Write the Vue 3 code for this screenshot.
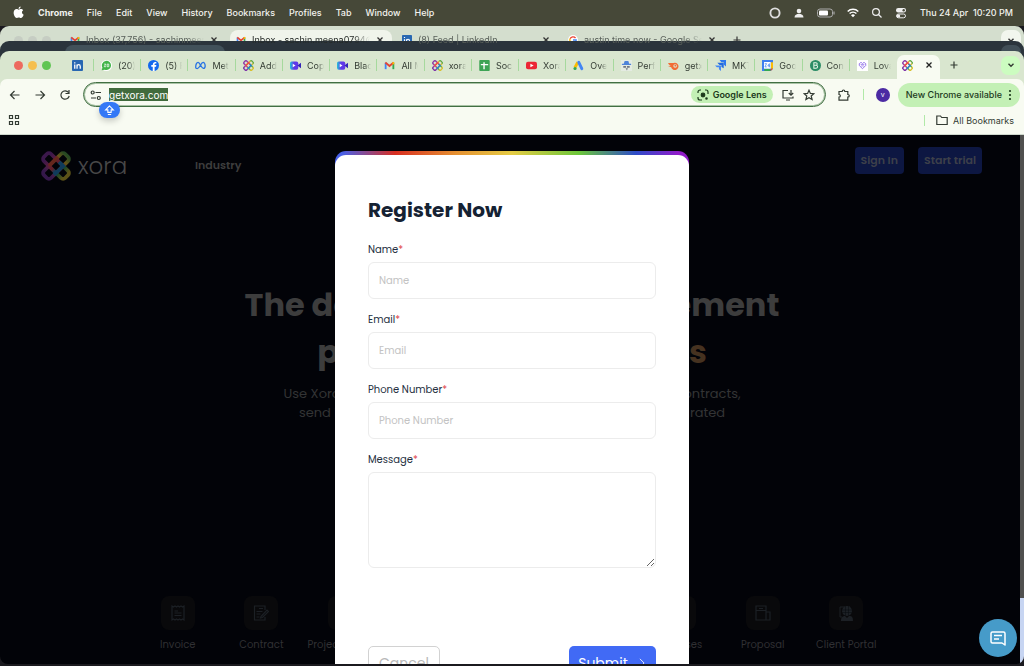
<script setup>
import { ref } from 'vue'

const menus = ['File', 'Edit', 'View', 'History', 'Bookmarks', 'Profiles', 'Tab', 'Window', 'Help']
const tabs = [
  { icon: 'whatsapp', text: '(20)' },
  { icon: 'facebook', text: '(5) F' },
  { icon: 'meta', text: 'Meta' },
  { icon: 'xora', text: 'Add' },
  { icon: 'video', text: 'Copy' },
  { icon: 'video', text: 'Black' },
  { icon: 'gmail', text: 'All M' },
  { icon: 'xora', text: 'xora' },
  { icon: 'sheets', text: 'Soc' },
  { icon: 'youtube', text: 'Xora' },
  { icon: 'ads', text: 'Over' },
  { icon: 'spy', text: 'Perf' },
  { icon: 'semrush', text: 'getx' },
  { icon: 'jira', text: 'MKT' },
  { icon: 'calendar', text: 'Goog' },
  { icon: 'brevo', text: 'Con' },
  { icon: 'lovable', text: 'Lova' },
]
const features = [
  { label: 'Invoice', icon: 'invoice' },
  { label: 'Contract', icon: 'contract' },
  { label: 'Project Planner', icon: 'project' },
  { label: 'Tasks', icon: 'project' },
  { label: 'Booking', icon: 'project' },
  { label: 'Forms', icon: 'project' },
  { label: 'Expenses', icon: 'project' },
  { label: 'Proposal', icon: 'proposal' },
  { label: 'Client Portal', icon: 'portal' },
]
const address = ref('getxora.com')
const name = ref('')
const email = ref('')
const phone = ref('')
const message = ref('')
</script>

<template>
  <div class="desktop">
    <svg class="defs" aria-hidden="true">
      <defs>
        <linearGradient id="g-video"><stop stop-color="#21c6d8" /><stop offset=".5" stop-color="#6038e8" /></linearGradient>
        <linearGradient id="g-down"><stop offset=".1" stop-color="#8a35a8" /><stop offset=".35" stop-color="#d8408a" /><stop offset=".48" stop-color="#e8484a" /><stop offset=".6" stop-color="#2589cf" /><stop offset=".75" stop-color="#41a453" /><stop offset=".95" stop-color="#d8c02e" /></linearGradient>
        <linearGradient id="g-up"><stop offset=".1" stop-color="#7d35a8" /><stop offset=".3" stop-color="#b84a98" /><stop offset=".45" stop-color="#e8484a" /><stop offset=".65" stop-color="#ee7a35" /><stop offset=".8" stop-color="#e8c22e" /><stop offset="1" stop-color="#59a848" /></linearGradient>
      </defs>
      <symbol id="i-linkedin" viewBox="0 0 12 12"><rect width="12" height="12" rx="1" fill="#2867b2" /><path d="M3 5v4.500M3 2.500v1.200M5.500 9.500V5M5.500 7c0-2.500 3.500-2.500 3.500 0v2.500" fill="none" stroke="#fff" stroke-width="1.400" /></symbol>
      <symbol id="i-whatsapp" viewBox="0 0 12 12"><circle cx="6" cy="6" r="6" fill="#fff" /><path d="M.8 11.200l.7-3A5 5 0 1 1 4 10.500z" fill="#43b54a" /><path d="M3.300 4.500h2L3.500 7.300h2M6.700 4.500h1.800v2.800H6.700z" fill="none" stroke="#fff" stroke-width=".8" /></symbol>
      <symbol id="i-facebook" viewBox="0 0 12 12"><circle cx="6" cy="6" r="6" fill="#1268ee" /><path d="M7.200 12V7.400h1.600l.3-1.900H7.200c-.1-1.500.3-1.900 1.900-1.700V2.200C6.800 1.700 5.200 2.600 5.200 5.500H3.600v1.900h1.600V12z" fill="#fff" /></symbol>
      <symbol id="i-meta" viewBox="0 0 12 12"><path d="M.8 8.500C.6 5 1.800 2.600 3.400 2.600c2 0 3.500 6.600 5.700 6.600 1.400 0 2-1.200 2-2.700 0-2-.9-3.900-2.300-3.900C6.400 2.600 5.300 9.300 2.500 9.300 1.500 9.300.8 9 .8 8.500z" fill="none" stroke="#2873e4" stroke-width="1.400" /></symbol>
      <symbol id="i-xora" viewBox="0 0 30 30"><g fill="none" stroke-width="3.800"><rect x="0" y="10" width="30" height="10" rx="3" transform="rotate(-45 15 15)" stroke="url(#g-up)" /><rect x="0" y="10" width="30" height="10" rx="3" transform="rotate(45 15 15)" stroke="url(#g-down)" /><path d="m8 15 9-9" stroke="#ee5a3a" /><path d="m13 24 9-9-4-4" stroke="#2589cf" /></g></symbol>
      <symbol id="i-video" viewBox="0 0 12 12"><rect y="1.500" width="9" height="9" rx="2" fill="url(#g-video)" /><path d="m8 6 4-3v6z" fill="#3424b8" /><path d="m3 4 3 2-3 2z" fill="#fff" /></symbol>
      <symbol id="i-gmail" viewBox="0 0 12 12"><path d="M1.800 10V3" stroke="#4285f4" stroke-width="2" /><path d="M10.200 10V3" stroke="#34a853" stroke-width="2" /><path d="m1.500 2.800 4.500 3.700 4.500-3.700" fill="none" stroke="#e54335" stroke-width="2" /><path d="M9.200 4.800V2.300l2 .2v2z" fill="#fbbc04" /></symbol>
      <symbol id="i-sheets" viewBox="0 0 12 12"><rect x=".3" width="11.400" height="12" rx="1" fill="#3da455" /><path d="M2 5h8M5.500 2.500v7.500" stroke="#fff" stroke-width="1.500" /></symbol>
      <symbol id="i-youtube" viewBox="0 0 12 12"><rect y="1.800" width="12" height="8.400" rx="2.200" fill="#ec2636" /><path d="M4.800 4v4l3.500-2z" fill="#fff" /></symbol>
      <symbol id="i-ads" viewBox="0 0 12 12"><path d="M5.200 2.500 2 8.500" stroke="#fbbc04" stroke-width="3.200" /><path d="m6.300 2.500 3.300 7" stroke="#4285f4" stroke-width="3.200" stroke-linecap="round" /><circle cx="2.200" cy="9.200" r="1.700" fill="#34a853" /></symbol>
      <symbol id="i-spy" viewBox="0 0 12 12"><rect width="12" height="12" fill="#e4ebe2" /><path d="M3 4 4 1h4l1 3zM1 4h10v1.500H1z" fill="#4e83d9" /><path d="M2.500 6.500h3v2h-3zM6.500 6.500h3v2h-3zM5 9h2.500l-1 2.500z" fill="#717783" /></symbol>
      <symbol id="i-semrush" viewBox="0 0 12 12"><path d="M0 3.200h6a4 4 0 1 1-2.500 4.600L0 6.500l3-.3L1 4.800z" fill="#f26b35" /><circle cx="7.800" cy="6.500" r="2" fill="#dce8d2" /><circle cx="8" cy="6.200" r="1" fill="#f26b35" /></symbol>
      <symbol id="i-jira" viewBox="0 0 12 12"><path d="M5 0h7v7L9.500 5V2.500H7z" fill="#2d78ee" /><path d="M2.500 3h7v6L7 7.500V5.500H5z" fill="#246ce0" /><path d="M0 6h6.500v6L4.300 10V8H2z" fill="#4388f4" /></symbol>
      <symbol id="i-calendar" viewBox="0 0 12 12"><path d="M0 0h12v9.500L9.500 12H0z" fill="#3d7ff0" /><path d="M9.500 2.500H12v7H9.500z" fill="#fbbc04" /><path d="M2.500 9.500h7V12h-7z" fill="#34a853" /><path d="m9.500 12 2.500-2.500H9.500z" fill="#ea4335" /><path d="M2.200 2.200h7.300v7.300H2.200z" fill="#fff" /><path d="M3 4h2L3.200 7.500h2M8 8V4L6.300 6.500h2.400" fill="none" stroke="#3d7ff0" stroke-width=".8" /></symbol>
      <symbol id="i-brevo" viewBox="0 0 12 12"><circle cx="6" cy="6" r="6" fill="#2c8c66" /><path d="M4.200 9V3h2.300c1.800 0 1.800 2.400.2 2.700C9 5.800 8.700 9 6.500 9zM4.200 5.700h2.500" fill="none" stroke="#e8f7e9" stroke-width="1.100" /></symbol>
      <symbol id="i-lovable" viewBox="0 0 12 12"><rect width="12" height="12" fill="#fff" /><path d="M6 9.500 2.500 6V4C4 2 5.500 3 6 3.800 6.500 3 8 2 9.500 4v2z" fill="none" stroke="#8d6be8" /><path d="M4 5h4M4.500 6.500h3" stroke="#8d6be8" stroke-width=".8" /></symbol>
      <symbol id="i-google" viewBox="0 0 12 12"><circle cx="6" cy="6" r="6" fill="#fff" /><g fill="none" stroke-width="1.700"><path d="M9 3.500A4 4 0 0 0 2.500 4.500" stroke="#ea4335" /><path d="M2.500 4.400a4 4 0 0 0 0 3.200" stroke="#fbbc04" /><path d="M2.500 7.500A4 4 0 0 0 8.600 9" stroke="#34a853" /><path d="M8.600 9A4 4 0 0 0 9.800 6H6" stroke="#4285f4" /></g></symbol>
      <symbol id="i-close" viewBox="0 0 8 8"><path d="m1.500 1.500 5 5m0-5-5 5" stroke="currentColor" stroke-width="1.300" /></symbol>
      <symbol id="i-plus" viewBox="0 0 8 8"><path d="M4 .5v7M.5 4h7" stroke="currentColor" stroke-width="1.200" /></symbol>
      <symbol id="i-down" viewBox="0 0 8 8"><path d="m1.500 2.800 2.500 2.500 2.500-2.500" fill="none" stroke="currentColor" stroke-width="1.400" /></symbol>
      <symbol id="f-invoice" viewBox="0 0 16 18"><path d="M2 2v14l1.500-1L5 16l1.500-1L8 16l1.500-1 1.500 1 1.500-1 1.500 1V2l-1.500 1L11 2 9.500 3 8 2 6.500 3 5 2 3.500 3zM4.500 7H8M4.500 9h7M4.500 11.500h7" fill="none" stroke="currentColor" stroke-width="1.200" /></symbol>
      <symbol id="f-contract" viewBox="0 0 16 18"><path d="M12 6V2H1.500v14H12v-3M6 4.500h4M3.500 7.500h6M3.500 10h4M3.500 13h3M8 12.500 14 6l1.500 1.500-6 6-2 .5z" fill="none" stroke="currentColor" stroke-width="1.200" /></symbol>
      <symbol id="f-project" viewBox="0 0 16 18"><path d="M2 3h12v12H2zM5 7h6M5 10h6" fill="none" stroke="currentColor" /></symbol>
      <symbol id="f-proposal" viewBox="0 0 16 18"><path d="M1 16V2h10v14zM1 6.500h10M4 4.500h4M11 8h4v8h-4" fill="none" stroke="currentColor" stroke-width="1.200" /></symbol>
      <symbol id="f-portal" viewBox="0 0 16 18"><path d="M12 3H2v10h2" fill="none" stroke="currentColor" /><circle cx="9" cy="7" r="5" fill="currentColor" /><path d="M4 6h10M4 8.500h10M7.500 2v10M10.500 2v10" stroke="#0a0e10" stroke-width=".6" /><path d="M3 17c0-4 2-5 4-5l2 2 2-2c3 0 4 1 4 5z" fill="currentColor" /></symbol>
    </svg>

    <header class="menubar">
      <svg class="apple" viewBox="0 0 12 14"><path d="M8.300.5c.1 1.500-1 2.600-2.200 2.700C6 1.800 7 .7 8.300.5zM6.200 4c.7 0 1.300-.7 2.500-.7 1 0 1.900.5 2.400 1.300-2 1.200-1.700 4 .5 4.900-.6 1.700-1.700 3.500-3 3.500-.9 0-1.200-.5-2.300-.5-1 0-1.500.5-2.300.5C2.500 13 .7 10 .7 7.300c0-2.500 1.500-4 3.200-4 1 0 1.700.7 2.300.7z" fill="#fff" /></svg>
      <strong>Chrome</strong>
      <span v-for="m in menus" :key="m">{{ m }}</span>
      <div class="status">
        <svg viewBox="0 0 12 12"><circle cx="6" cy="6" r="4.600" fill="none" stroke="#ddd" stroke-width="1.900" /></svg>
        <svg viewBox="0 0 12 12"><circle cx="6" cy="4" r="2.300" fill="#eee" /><path d="M1.500 10.500C1.500 5.500 10.500 5.500 10.500 10.500z" fill="#eee" /></svg>
        <svg class="battery" viewBox="0 0 18 10"><rect x=".5" y="1" width="15" height="8" rx="2.500" fill="none" stroke="#aaa" /><rect x="2" y="2.500" width="9" height="5" rx="1" fill="#fff" /><path d="M17 3.500v3" stroke="#aaa" stroke-width="1.200" /></svg>
        <svg viewBox="0 0 12 12"><path d="M.7 4.500a7.500 7.500 0 0 1 10.600 0M2.600 6.500a5 5 0 0 1 6.800 0" fill="none" stroke="#fff" stroke-width="1.500" /><path d="M4 8.200a3 3 0 0 1 4 0l-2 2z" fill="#fff" /></svg>
        <svg viewBox="0 0 12 12"><circle cx="5" cy="5" r="3.400" fill="none" stroke="#eee" stroke-width="1.200" /><path d="m7.500 7.500 3 3" stroke="#eee" stroke-width="1.300" /></svg>
        <svg viewBox="0 0 12 12"><rect x="1" y="1" width="10" height="4.400" rx="2.200" fill="#eee" /><circle cx="8.700" cy="3.200" r="1.200" fill="#4a4b3c" /><rect x="1.500" y="7" width="9" height="3.800" rx="1.900" fill="none" stroke="#eee" /><circle cx="3.500" cy="8.900" r="1.700" fill="#eee" /></svg>
      </div>
      <time>Thu 24 Apr&nbsp; 10:20 PM</time>
    </header>

    <div class="back-window">
      <i class="dot" /><i class="dot" /><i class="dot" />
      <div class="back-tabs">
        <div class="back-tab"><svg><use href="#i-gmail" /></svg><span>Inbox (37,756) - sachinmeena</span><svg class="x"><use href="#i-close" /></svg></div>
        <div class="back-tab current"><svg><use href="#i-gmail" /></svg><span>Inbox - sachin.meena0794@gm</span><svg class="x"><use href="#i-close" /></svg></div>
        <div class="back-tab"><svg><use href="#i-linkedin" /></svg><span>(8) Feed | LinkedIn</span><svg class="x"><use href="#i-close" /></svg></div>
        <div class="back-tab"><svg><use href="#i-google" /></svg><span>austin time now - Google Sear</span><svg class="x"><use href="#i-close" /></svg></div>
      </div>
      <svg class="x add"><use href="#i-plus" /></svg>
      <div class="back-down"><svg class="x"><use href="#i-down" /></svg></div>
    </div>
    <div class="dark-window"><div class="dark-tab" /><div class="dark-down" /></div>

    <div class="browser">
      <nav class="tabstrip">
        <i class="light red" /><i class="light yellow" /><i class="light green" />
        <svg class="fav pinned"><use href="#i-linkedin" /></svg>
        <div class="tabs">
          <div v-for="(t, i) in tabs" :key="i" class="tab"><svg class="fav"><use :href="'#i-' + t.icon" /></svg><span>{{ t.text }}</span></div>
        </div>
        <div class="active-tab"><svg class="fav"><use href="#i-xora" /></svg><button aria-label="Close tab"><svg><use href="#i-close" /></svg></button></div>
        <button class="new-tab" aria-label="New tab"><svg><use href="#i-plus" /></svg></button>
        <button class="tab-search" aria-label="Search tabs"><svg><use href="#i-down" /></svg></button>
      </nav>
      <div class="toolbar">
        <button aria-label="Back"><svg viewBox="0 0 12 12"><path d="M10.500 6h-9M5.500 2l-4 4 4 4" /></svg></button>
        <button aria-label="Forward"><svg viewBox="0 0 12 12"><path d="M1.500 6h9M6.500 2l4 4-4 4" /></svg></button>
        <button aria-label="Reload"><svg viewBox="0 0 12 12"><path d="M9.500 3.500A4.200 4.200 0 1 0 10.200 7M10 1v3.500H6.500" /></svg></button>
        <div class="omnibox">
          <svg class="tune" viewBox="0 0 12 12"><path d="M5.500 3.500H11M1 9h5" /><circle cx="2.700" cy="3.500" r="1.500" /><circle cx="8.800" cy="9" r="1.500" /></svg>
          <div class="url"><input v-model="address" aria-label="Address" /></div>
          <button class="lens"><svg viewBox="0 0 12 12"><path d="M1 4V3a2 2 0 0 1 2-2h1M8 1h1a2 2 0 0 1 2 2v2M1 8v1a2 2 0 0 0 2 2h2" /><circle cx="6" cy="6" r="1.800" fill="#1d3a1c" /><circle cx="9.500" cy="9.500" r=".7" /></svg>Google Lens</button>
          <button aria-label="Install"><svg viewBox="0 0 12 12"><path d="M6 1.500H1v7.500h10V7.500M4 11h4M9 1v5M6.800 4 9 6.200 11.200 4" /></svg></button>
          <button aria-label="Bookmark"><svg viewBox="0 0 12 12"><path d="m6 1.200 1.400 3.200 3.500.3-2.700 2.300.9 3.500L6 8.700l-3.100 1.800.9-3.500L1.100 4.700l3.500-.3z" /></svg></button>
          <span class="caps"><svg viewBox="0 0 12 12"><path d="M6 1 1.800 5.300h2.400V8h3.600V5.300h2.400zM4.200 10.300h3.600" /></svg></span>
        </div>
        <button class="ext" aria-label="Extensions"><svg viewBox="0 0 12 12"><path d="M1 2.500h3.200c0-2 2.600-2 2.600 0h3v3c2 0 2 2.700 0 2.700v3H1V8c1.800 0 1.800-2.500 0-2.500z" /></svg></button>
        <i class="rule" />
        <span class="avatar">v</span>
        <button class="update">New Chrome available<svg viewBox="0 0 4 12"><circle cx="2" cy="2" r=".5" /><circle cx="2" cy="6" r=".5" /><circle cx="2" cy="10" r=".5" /></svg></button>
      </div>
      <div class="bookmarks">
        <svg class="apps" viewBox="0 0 12 12"><path d="M1.500 1.500h3v3h-3zM7.500 1.500h3v3h-3zM1.500 7.500h3v3h-3zM7.500 7.500h3v3h-3z" /></svg>
        <i class="rule" />
        <svg viewBox="0 0 12 12"><path d="M.8 2h3.700l1.200 1.500h5.500v7H.8z" /></svg>
        <span>All Bookmarks</span>
      </div>
    </div>

    <main class="page">
      <div class="site-header">
        <svg class="logo"><use href="#i-xora" /></svg>
        <span class="brand">xora</span>
        <a href="#" class="nav-link">Industry</a>
        <button class="cta">Sign In</button>
        <button class="cta">Start trial</button>
      </div>
      <h1>The doc and client management<br>platform for <em>businesses</em></h1>
      <p>Use Xora to organize all your clients, projects, proposals and contracts,<br>send invoices and get paid on time, all from one single integrated</p>
      <div class="features">
        <div v-for="f in features" :key="f.label" class="feature"><span class="tile"><svg><use :href="'#f-' + f.icon" /></svg></span><span>{{ f.label }}</span></div>
      </div>

      <div class="modal-layer">
        <form class="modal" @submit.prevent>
          <div class="modal-body">
            <h2>Register Now</h2>
            <label for="name">Name<b>*</b></label>
            <input id="name" v-model="name" placeholder="Name">
            <label for="email">Email<b>*</b></label>
            <input id="email" v-model="email" type="email" placeholder="Email">
            <label for="phone">Phone Number<b>*</b></label>
            <input id="phone" v-model="phone" type="tel" placeholder="Phone Number">
            <label for="message">Message<b>*</b></label>
            <textarea id="message" v-model="message" />
            <div class="actions">
              <button type="button" class="cancel">Cancel</button>
              <button type="submit" class="submit">Submit<svg viewBox="0 0 12 12"><path d="m3.500 1 5 5-5 5" fill="none" stroke="#fff" /></svg></button>
            </div>
          </div>
        </form>
      </div>
      <div class="scrollbar"><i /></div>
      <button class="chat" aria-label="Chat"><svg viewBox="0 0 16 16"><path d="M15 15V3.500A1.500 1.500 0 0 0 13.500 2h-11A1.500 1.500 0 0 0 1 3.500v8A1.500 1.500 0 0 0 2.500 13H12zM4 5.500h8M4 9h5" fill="none" stroke="#fff" stroke-width="1.500" stroke-linejoin="round" /></svg></button>
    </main>
  </div>
</template>

<style>
html, body { margin: 0; background: #1b1a1f; overflow: hidden; }
</style>
<style scoped>
* { box-sizing: border-box; }
.desktop { height: 100vh; display: flex; flex-direction: column; font: 9px Inter, sans-serif; background: #1b1a1f; overflow: hidden; padding-bottom: 2px; }
.defs { position: absolute; width: 0; height: 0; }
button { border: 0; background: none; padding: 0; font: inherit; color: inherit; display: flex; align-items: center; justify-content: center; }
svg { flex: none; display: block; }

.menubar { flex: none; height: 26px; display: flex; align-items: center; gap: 14px; padding: 0 11px 1px 13px; color: #f2f2ee; font-weight: 500; white-space: nowrap; background: #464838; }
.menubar strong { font-weight: 700; }
.apple { width: 11px; height: 13px; }
.status { margin-left: auto; display: flex; align-items: center; gap: 12px; }
.status svg { width: 12px; height: 12px; }
.status .battery { width: 18px; height: 10px; }
time { margin-left: -1px; }

.back-window { flex: none; height: 28px; border-radius: 9px 9px 0 0; background: #d4dece; display: flex; align-items: flex-start; padding: 4px 3px 0 14px; color: #59605a; }
.dot { width: 9px; height: 9px; border-radius: 50%; background: #c6cdc3; margin: 6px 5px 0 0; flex: none; }
.back-tabs { display: flex; gap: 4px; margin-left: 8px; }
.back-tab { width: 162px; flex: none; display: flex; align-items: center; height: 19px; padding: 0 8px 0 6px; gap: 6px; }
.back-tab.current { background: #f0f4eb; border-radius: 8px 8px 0 0; color: #252a27; }
.back-tab svg { width: 10px; height: 10px; }
.back-tab span { flex: 1; overflow: hidden; white-space: nowrap; -webkit-mask-image: linear-gradient(90deg, #000 85%, transparent); mask-image: linear-gradient(90deg, #000 85%, transparent); }
.back-tab .x, .x { width: 8px; height: 8px; color: #333; }
.add { margin: 6px 0 0 9px; }
.back-down { margin-left: auto; width: 20px; height: 20px; border-radius: 7px; background: #f2f6ee; display: flex; align-items: center; justify-content: center; }
.dark-window { flex: none; height: 20px; margin-top: -13px; border-radius: 9px 9px 0 0; background: #2b343c; display: flex; justify-content: space-between; padding: 4px 3px 0 65px; }
.dark-tab { width: 160px; border-radius: 8px 8px 0 0; background: #42515a; }
.dark-down { width: 20px; border-radius: 7px 7px 0 0; background: #414e57; }

.browser { flex: none; margin-top: -10px; border-radius: 9px 9px 0 0; background: #d9e6cf; color: #333b33; position: relative; }
.tabstrip { height: 28px; display: flex; align-items: center; padding: 0 4px 0 14px; }
.light { width: 9px; height: 9px; border-radius: 50%; margin-right: 5px; flex: none; }
.red { background: #ed6a5f; }
.yellow { background: #f5bf4f; }
.green { background: #61c554; }
.fav { width: 11px; height: 11px; }
.pinned { margin: 0 10px 0 16px; }
.tabs { flex: 1; display: flex; }
.tab { flex: 1; height: 12px; display: flex; align-items: center; gap: 6px; min-width: 0; border-left: 1px solid #a6d99d; padding-left: 7px; }
.tab span { width: 17px; overflow: hidden; white-space: nowrap; -webkit-mask-image: linear-gradient(90deg, #000 60%, transparent); mask-image: linear-gradient(90deg, #000 60%, transparent); }
.active-tab { width: 43px; height: 24px; margin: 4px 0 0 1px; background: #f8fbf2; border-radius: 7px 7px 0 0; display: flex; align-items: center; justify-content: space-between; padding: 0 7px 4px 5px; color: #222; }
.active-tab button svg, .new-tab svg, .tab-search svg { width: 8px; height: 8px; }
.new-tab { width: 28px; height: 20px; }
.tab-search { width: 19px; height: 19px; background: #ccfcc0; border-radius: 7px; margin-left: 33px; }
.toolbar { height: 31px; background: #f8fbf2; border-radius: 7px 7px 0 0; display: flex; align-items: center; padding: 0 4px 0 8px; gap: 12px; }
.toolbar svg, .bookmarks svg { width: 12px; height: 12px; fill: none; stroke: currentColor; stroke-width: 1.200; }
.toolbar > button { min-width: 13px; }
.omnibox { flex: 1; height: 25px; position: relative; border: 1px solid #426f43; box-shadow: inset 0 0 0 1px #a9c3a5; border-radius: 13px; display: flex; align-items: center; padding: 0 10px 0 6px; gap: 9px; }
.url { flex: 1; display: flex; }
.url input { width: 59px; height: 13px; border: 0; padding: 0; margin-left: -2px; background: #416b3d; color: #fff; font: 10px Inter, sans-serif; outline: 0; }
.lens { background: #c3f0b5; height: 17px; border-radius: 9px; padding: 0 6px; gap: 4px; font-weight: 600; color: #1d3a1c; }
.caps { position: absolute; left: 15px; top: 19px; width: 21px; height: 16px; background: #3478f6; border-radius: 8px; color: #fff; display: flex; align-items: center; justify-content: center; box-shadow: 0 3px 6px #0003; }
.caps svg { width: 11px; height: 11px; }
.rule { width: 1px; height: 11px; background: #b1e9a8; }
.avatar { width: 14px; height: 14px; border-radius: 50%; background: #4b2aa3; color: #fff; font-size: 7px; text-align: center; line-height: 14px; }
.update { height: 24px; border-radius: 12px; padding: 0 8px; gap: 6px; background: #c3f0b5; font-weight: 500; color: #1d3a1c; white-space: nowrap; margin-left: -4px; }
.update svg { width: 4px; height: 12px; }
.bookmarks { height: 25px; background: #f8fbf2; border-bottom: 1px solid #cfd8cd; display: flex; align-items: center; gap: 5px; padding: 0 10px 4px 8px; }
.bookmarks .rule { margin: 0 6px 0 auto; }

.page { flex: 1; min-height: 0; position: relative; overflow: hidden; background: #020308; border-radius: 0 0 8px 8px; color: #3d3d3d; font-family: Poppins, Inter, sans-serif; display: flex; flex-direction: column; }
.site-header { display: flex; align-items: center; padding: 5px 42px 0 41px; height: 50px; }
.logo { width: 30px; height: 30px; margin-top: 6px; opacity: .42; }
.brand { font-size: 23px; font-weight: 300; margin: 6px 0 0 7px; flex: 0 0 117px; color: #484848; }
.nav-link { font-size: 11px; font-weight: 600; color: inherit; text-decoration: none; margin: 6px auto 0 0; }
.cta { height: 27px; border-radius: 4px; padding: 0 6px; background: #0d1742; color: #3d404a; font-size: 11px; font-weight: 600; margin: -4px 0 0 14px; }
h1 { margin: 96px 0 0; text-align: center; font-size: 32px; line-height: 47px; font-weight: 700; }
h1 em { color: #463220; font-style: normal; }
p { margin: 9px 0 0; text-align: center; font-size: 13px; line-height: 19px; color: #333435; }
.features { margin-top: auto; padding: 0 136px 11px; display: flex; justify-content: space-between; color: #303033; font-size: 10px; }
.feature { width: 84px; display: flex; flex-direction: column; align-items: center; gap: 7px; white-space: nowrap; }
.tile { width: 34px; height: 34px; border-radius: 8px; background: #09090b; display: flex; align-items: center; justify-content: center; color: #1c2025; }
.tile svg { width: 16px; height: 18px; }
.modal-layer { position: absolute; inset: 16px 0 0; display: flex; justify-content: center; align-items: flex-start; }
.modal { width: 354px; border-radius: 11px; padding-top: 4px; background: linear-gradient(90deg, #4860e8 2%, #d82e20 17%, #e59031 34%, #e5cc45 50%, #6bc63a 69%, #2d4cc8 85%, #911bc9 97%); }
.modal-body { background: #fff; border-radius: 11px; padding: 40px 33px 30px; }
h2 { margin: 0 0 17px; font-size: 20px; line-height: 30px; font-weight: 700; color: #152233; }
label { display: block; font-size: 10px; line-height: 16px; color: #253041; margin-bottom: 4px; }
label b { color: #e0454b; font-weight: 400; }
.modal-body input, textarea { display: block; width: 100%; height: 37px; border: 1px solid #ececec; border-radius: 6px; padding: 0 10px; margin: 0 0 13px; font: 10px Poppins, Inter, sans-serif; color: #253041; background: #fff; outline: 0; }
.modal-body ::placeholder { color: #c3c3c3; opacity: 1; }
.modal-body textarea { height: 96px; margin-bottom: 78px; resize: vertical; }
.actions { display: flex; justify-content: space-between; }
.actions button { height: 34px; border-radius: 5px; font-size: 14px; }
.cancel { width: 72px; border: 1px solid #d2d2d2; color: #b9b9b9; font-weight: 400; }
.submit { width: 87px; background: #416af5; color: #fff; gap: 9px; }
.submit svg { width: 10px; height: 12px; }
.scrollbar { position: absolute; inset: 0 0 0 auto; width: 4px; background: #50504f; display: flex; align-items: flex-end; }
.scrollbar i { width: 4px; height: 66px; background: #c7d5f2; }
.chat { position: absolute; right: 7px; bottom: 7px; width: 38px; height: 38px; border-radius: 50%; background: #469bc9; }
.chat svg { width: 16px; height: 16px; }
</style>
